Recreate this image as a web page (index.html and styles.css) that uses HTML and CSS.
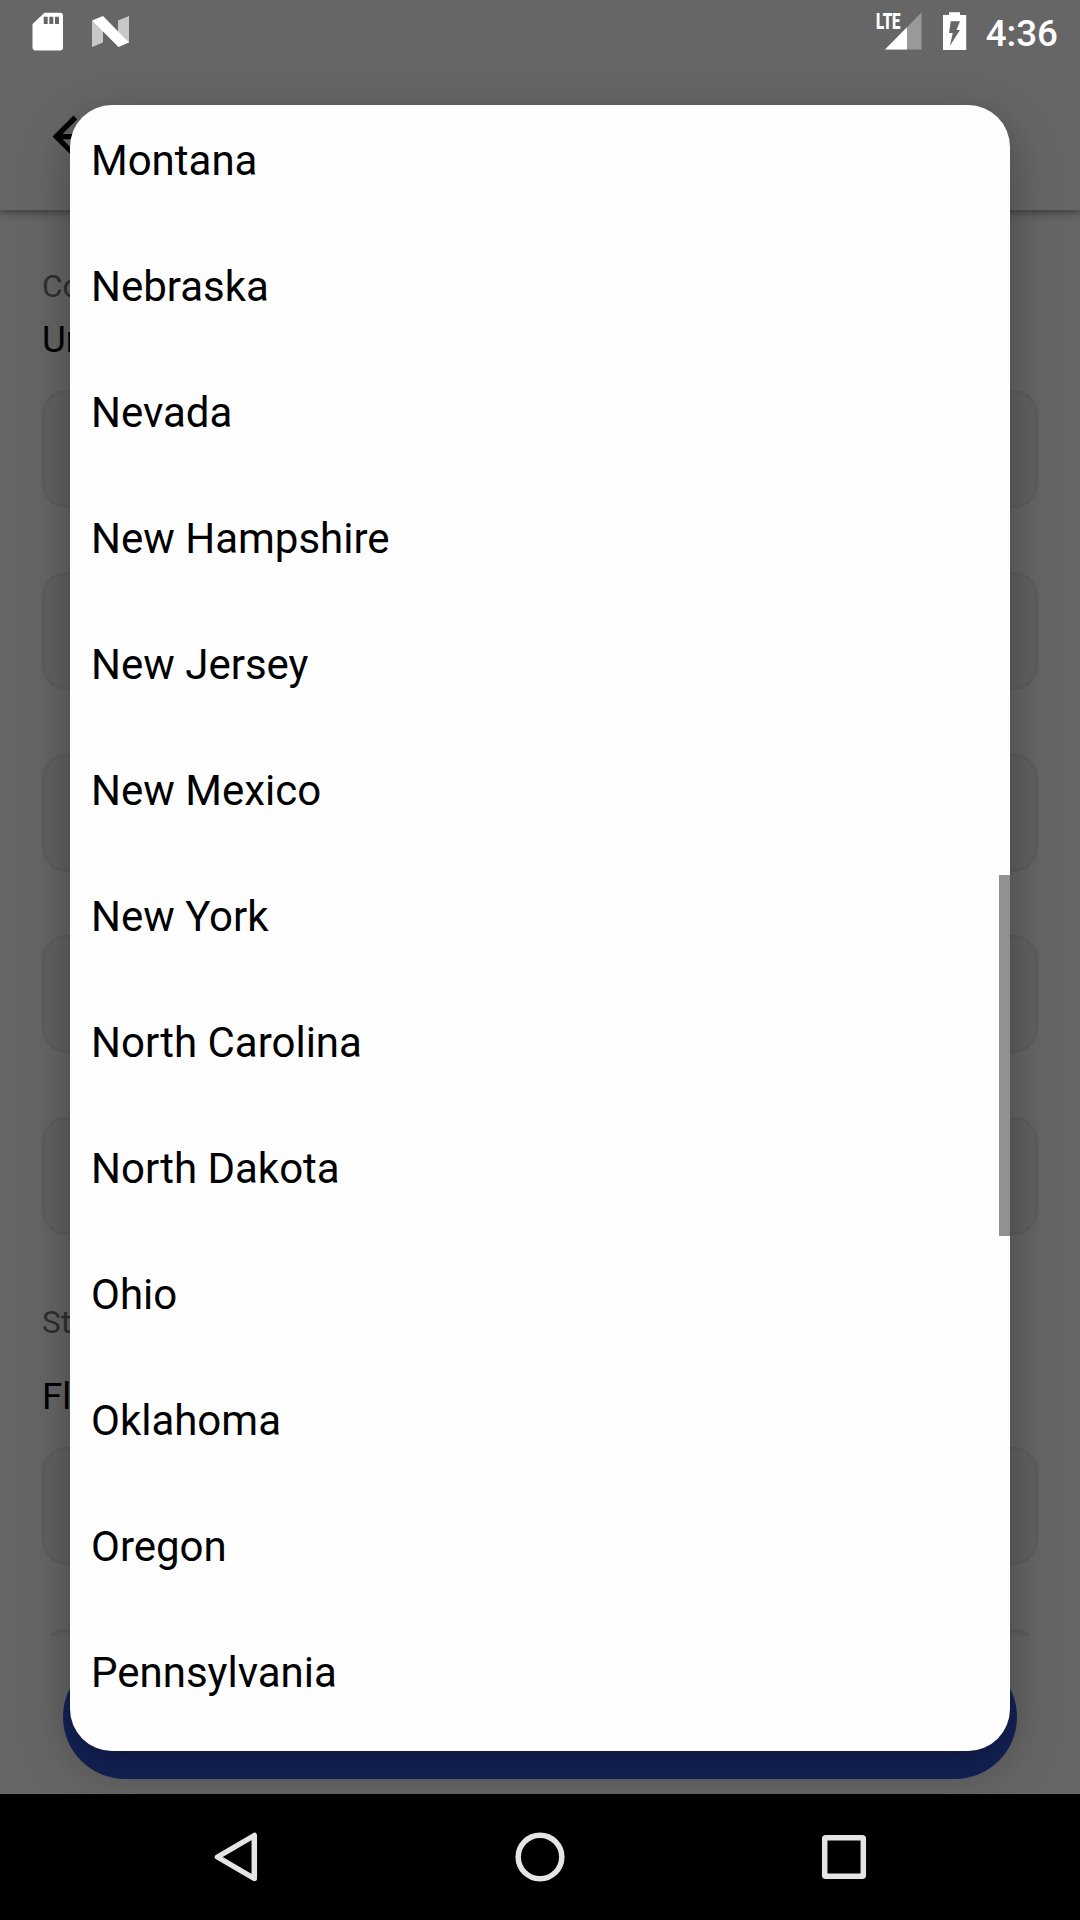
FILE: index.html
```html
<!DOCTYPE html>
<html lang="en">
<head>
<meta charset="utf-8">
<title>Select state</title>
<link rel="stylesheet" href="styles.css">
</head>
<body>
<div class="screen">
  <div class="app">
    <header class="app-bar">
      <svg class="back" viewBox="0 0 24 24"><path d="M20 11H7.83l5.59-5.59L12 4l-8 8 8 8 1.41-1.41L7.83 13H20v-2z"/></svg>
    </header>
    <main class="form">
      <div class="label">Country</div>
      <div class="value">United States</div>
      <div class="fields">
        <div class="field"></div>
        <div class="field"></div>
        <div class="field"></div>
        <div class="field"></div>
        <div class="field"></div>
      </div>
      <div class="label label-state">State</div>
      <div class="value value-state">Florida</div>
      <div class="fields">
        <div class="field"></div>
        <div class="field"></div>
      </div>
    </main>
    <footer class="actions"><div class="submit"></div></footer>
    <div class="scrim">
      <div class="dialog">
        <ul class="options">
          <li>Montana</li>
          <li>Nebraska</li>
          <li>Nevada</li>
          <li>New Hampshire</li>
          <li>New Jersey</li>
          <li>New Mexico</li>
          <li>New York</li>
          <li>North Carolina</li>
          <li>North Dakota</li>
          <li>Ohio</li>
          <li>Oklahoma</li>
          <li>Oregon</li>
          <li>Pennsylvania</li>
        </ul>
        <div class="scrollbar"></div>
      </div>
    </div>
    <div class="status-bar">
      <svg class="sd" width="32" height="40" viewBox="0 0 32 40">
        <path fill="#fff" d="M12.500 .7H28q3 0 3 3V35.500q0 3-3 3H3.500q-3 0-3-3V12z"/>
        <path fill="#666" d="M11.700 4.700h4v7.300h-4zM17.300 4.700h4v7.300h-4zM23 4.700h4v7.300h-4z"/>
      </svg>
      <svg class="nougat" width="40" height="34" viewBox="0 0 40 34">
        <path fill="#c8c8c8" d="M2 6l11 6v15.500L2 32zM28 5.500L39 1v27L28 18z"/>
        <path fill="#fff" d="M2 5.500L13 1l26 26.500L28.500 32z"/>
      </svg>
      <svg class="signal" width="50" height="40" viewBox="0 0 50 40">
        <path fill="#999" d="M47.500 .5v37H11z"/>
        <path fill="#fff" d="M33 15.200V37.500H11z"/>
        <path fill="#666" d="M0 0h27.500v18.500H0z"/>
        <text class="lte" x="2" y="17" textLength="24.500" lengthAdjust="spacingAndGlyphs">LTE</text>
      </svg>
      <svg class="battery" width="26" height="40" viewBox="0 0 26 40">
        <path fill="#fff" d="M7 .3h11v2.700h6.200v35H1V3h6z"/>
        <path fill="#666" d="M8.800 9.300h9.200l-3.500 8.700H18L7.800 34l3-13H7z"/>
      </svg>
      <span class="clock">4:36</span>
    </div>
  </div>
  <nav class="nav-bar">
    <svg width="60" height="60" viewBox="0 0 60 60"><path d="M48.300 8.500v43L11.500 30z"/></svg>
    <svg width="60" height="60" viewBox="0 0 60 60"><circle cx="30" cy="30" r="21.800"/></svg>
    <svg width="60" height="60" viewBox="0 0 60 60"><rect x="10.700" y="10.700" width="38.600" height="38.600" rx="1"/></svg>
  </nav>
</div>
</body>
</html>
```
FILE: styles.css
```css
* { box-sizing: border-box; }
body {
  margin: 0;
  font-family: Roboto, "Liberation Sans", sans-serif;
}
.screen {
  display: flex;
  flex-direction: column;
  width: 1080px;
  height: 1920px;
  overflow: hidden;
  background: #000;
}
.app {
  position: relative;
  display: flex;
  flex-direction: column;
  height: 1794px;
  overflow: hidden;
  background: #fff;
}
.app-bar {
  display: flex;
  align-items: center;
  flex: none;
  height: 210px;
  padding: 63px 42px 0;
  background: #fff;
  box-shadow: 0 2px 9px rgba(0, 0, 0, .45);
  z-index: 1;
}
.back { width: 63px; height: 63px; }
.form {
  height: 1426px;
  flex: none;
  padding: 57px 42px 0;
  overflow: hidden;
}
.label {
  font-size: 31.5px;
  line-height: 40px;
  color: #777;
}
.value {
  margin: 11px 0 28px;
  font-size: 36.75px;
  line-height: 44px;
  color: #000;
}
.label-state { margin-top: 68px; }
.value-state { margin-top: 32px; }
.fields {
  display: flex;
  flex-direction: column;
  gap: 63.75px;
}
.field {
  height: 118px;
  border: 3px solid #ebebeb;
  border-radius: 24px;
  background: #f5f5f5;
}
.actions {
  flex: 1;
  padding: 19px 63px 15px;
}
.submit {
  height: 124px;
  border-radius: 62px;
  background: #3358dc;
}
.scrim {
  position: absolute;
  inset: 0;
  display: flex;
  padding: 105px 70px 43px;
  background: rgba(0, 0, 0, .6);
  z-index: 2;
}
.dialog {
  position: relative;
  flex: 1;
  border-radius: 42px;
  background: #fefefe;
  box-shadow: 0 20px 60px rgba(0, 0, 0, .2), 0 10px 30px rgba(0, 0, 0, .14);
}
.options {
  margin: -7px 0 0;
  padding: 0 21px;
  list-style: none;
  font-size: 42px;
  line-height: 126px;
  color: #000;
}
.options li { height: 126px; }
.scrollbar {
  position: absolute;
  top: 770px;
  right: 0;
  width: 11px;
  height: 361px;
  background: #919191;
}
.status-bar {
  position: absolute;
  inset: 0 0 auto;
  display: flex;
  align-items: flex-start;
  height: 63px;
  padding: 12px 22px 0 32px;
  z-index: 3;
}
.nougat { margin: 3px 0 0 26px; }
.signal { margin-left: auto; }
.lte {
  font-size: 22.5px;
  font-weight: 900;
  fill: #fff;
}
.battery { margin-left: 18px; }
.clock {
  margin-left: 18px;
  font-size: 36.75px;
  font-weight: 500;
  line-height: 43px;
  color: #fff;
}
.nav-bar {
  display: grid;
  grid-template-columns: repeat(3, 304px);
  place-content: center;
  place-items: center;
  height: 126px;
}
.nav-bar svg {
  fill: none;
  stroke: #e5e5e5;
  stroke-width: 5.5;
  stroke-linejoin: round;
}
```
